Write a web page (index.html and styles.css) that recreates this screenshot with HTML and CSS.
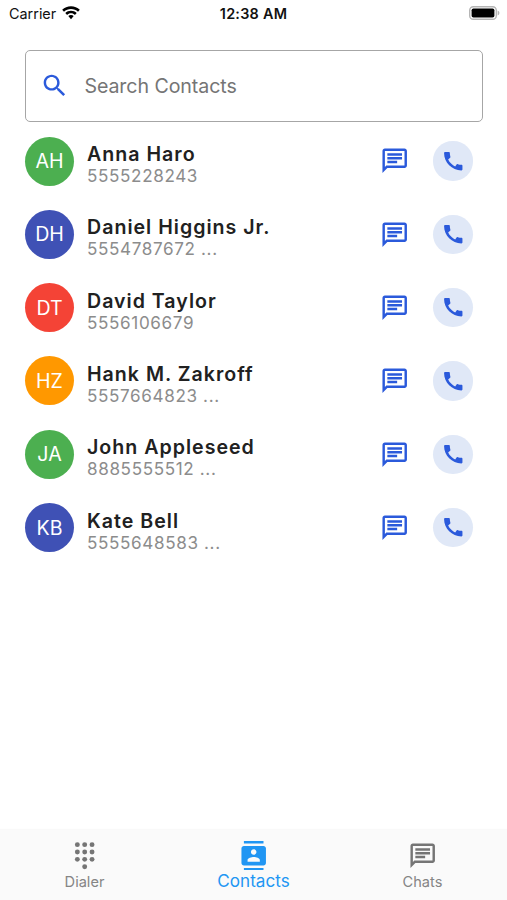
FILE: index.html
```html
<!DOCTYPE html>
<html lang="en">
<head>
<meta charset="utf-8">
<title>Contacts</title>
<link rel="stylesheet" href="styles.css">
</head>
<body>
<svg class="defs" aria-hidden="true">
  <symbol id="chat" viewBox="0 0 24 24"><path d="M4 4h16v12H5.170L4 17.170V4m0-2c-1.100 0-1.990.9-1.990 2L2 22l4-4h14c1.100 0 2-.9 2-2V4c0-1.100-.9-2-2-2H4zm2 10h8v2H6v-2zm0-3h12v2H6V9zm0-3h12v2H6V6z"/></symbol>
  <symbol id="call" viewBox="0 0 24 24"><path d="M20.010 15.380c-1.230 0-2.420-.2-3.530-.56-.35-.12-.74-.03-1.010.24l-1.570 1.970c-2.830-1.350-5.480-3.900-6.890-6.830l1.950-1.660c.27-.28.35-.67.24-1.020-.37-1.110-.56-2.300-.56-3.530 0-.54-.45-.99-.99-.99H4.190C3.650 3 3 3.240 3 3.990 3 13.280 10.730 21 20.010 21c.71 0 .99-.63.99-1.180v-3.450c0-.54-.45-.99-.99-.99z"/></symbol>
</svg>
<header class="status">
  <div class="carrier"><span>Carrier</span>
    <svg class="wifi" viewBox="0 0 18 14"><path d="M9 .3C5.600.300 2.500 1.600.200 3.800l1.800 1.900C3.800 3.900 6.300 2.900 9 2.900s5.200 1 7 2.800l1.800-1.900C15.500 1.600 12.400.3 9 .3zM9 4.700c-2.200 0-4.200.8-5.700 2.300l1.800 1.900C6.100 7.900 7.500 7.300 9 7.300s2.900.6 3.900 1.600L14.700 7C13.200 5.500 11.200 4.700 9 4.700zM9 9c-1 0-2 .4-2.700 1.100L9 13.200l2.700-3.100C11 9.400 10 9 9 9z"/></svg>
  </div>
  <div class="time">12:38 AM</div>
  <div class="power"><svg class="battery" viewBox="0 0 31 14"><rect x=".7" y=".7" width="26.600" height="12.600" rx="3.600" fill="#fff" stroke="#b5b5b5" stroke-width="1.400"/><rect x="2.600" y="2.400" width="22.800" height="9.200" rx="1.800"/><path d="M28.600 4.500c2.400 1 2.400 4 0 5z" fill="#b5b5b5"/></svg></div>
</header>
<main>
  <div class="search">
    <svg class="icon" viewBox="0 0 24 24"><path d="M15.500 14h-.79l-.28-.27C15.410 12.590 16 11.110 16 9.500 16 5.910 13.090 3 9.500 3S3 5.910 3 9.500 5.910 16 9.500 16c1.610 0 3.090-.59 4.230-1.570l.27.28v.79l5 4.990L20.490 19l-4.990-5zm-6 0C7.010 14 5 11.990 5 9.500S7.010 5 9.500 5 14 7.010 14 9.500 11.990 14 9.500 14z"/></svg>
    <span>Search Contacts</span>
  </div>
  <ul class="list">
    <li class="row"><div class="avatar green">AH</div><div class="info"><div class="name">Anna Haro</div><div class="phone">5555228243</div></div><svg class="icon"><use href="#chat"/></svg><div class="dial"><svg><use href="#call"/></svg></div></li>
    <li class="row"><div class="avatar indigo">DH</div><div class="info"><div class="name">Daniel Higgins Jr.</div><div class="phone">5554787672 ...</div></div><svg class="icon"><use href="#chat"/></svg><div class="dial"><svg><use href="#call"/></svg></div></li>
    <li class="row"><div class="avatar red">DT</div><div class="info"><div class="name">David Taylor</div><div class="phone">5556106679</div></div><svg class="icon"><use href="#chat"/></svg><div class="dial"><svg><use href="#call"/></svg></div></li>
    <li class="row"><div class="avatar orange">HZ</div><div class="info"><div class="name">Hank M. Zakroff</div><div class="phone">5557664823 ...</div></div><svg class="icon"><use href="#chat"/></svg><div class="dial"><svg><use href="#call"/></svg></div></li>
    <li class="row"><div class="avatar green">JA</div><div class="info"><div class="name">John Appleseed</div><div class="phone">8885555512 ...</div></div><svg class="icon"><use href="#chat"/></svg><div class="dial"><svg><use href="#call"/></svg></div></li>
    <li class="row"><div class="avatar indigo">KB</div><div class="info"><div class="name">Kate Bell</div><div class="phone">5555648583 ...</div></div><svg class="icon"><use href="#chat"/></svg><div class="dial"><svg><use href="#call"/></svg></div></li>
  </ul>
</main>
<nav class="tabs">
  <div class="tab"><svg class="icon" viewBox="0 0 24 24"><g><circle cx="6" cy="3" r="2"/><circle cx="12" cy="3" r="2"/><circle cx="18" cy="3" r="2"/><circle cx="6" cy="9" r="2"/><circle cx="12" cy="9" r="2"/><circle cx="18" cy="9" r="2"/><circle cx="6" cy="15" r="2"/><circle cx="12" cy="15" r="2"/><circle cx="18" cy="15" r="2"/><circle cx="12" cy="21" r="2"/></g></svg><span>Dialer</span></div>
  <div class="tab active"><svg class="icon" viewBox="0 0 24 24"><path d="M20 0H4v2h16V0zM4 24h16v-2H4v2zM20 4H4c-1.100 0-2 .9-2 2v12c0 1.100.9 2 2 2h16c1.100 0 2-.9 2-2V6c0-1.100-.9-2-2-2zm-8 2.750c1.240 0 2.250 1.010 2.250 2.250s-1.010 2.250-2.250 2.250S9.750 10.240 9.750 9 10.760 6.750 12 6.750zM17 17H7v-1.500c0-1.670 3.330-2.500 5-2.500s5 .83 5 2.500V17z"/></svg><span>Contacts</span></div>
  <div class="tab"><svg class="icon"><use href="#chat"/></svg><span>Chats</span></div>
</nav>
</body>
</html>
```
FILE: styles.css
```css
* { box-sizing: border-box; }
body {
  margin: 0;
  height: 900px;
  display: flex;
  flex-direction: column;
  background: #fff;
  font-family: Inter, "Liberation Sans", sans-serif;
  overflow: hidden;
}
svg { display: block; flex: none; }
.defs { width: 0; height: 0; position: absolute; }
.icon { width: 29.4px; height: 29.4px; fill: currentColor; }

.status {
  height: 28px;
  padding: 0 7px 1px 9px;
  display: grid;
  grid-template-columns: 1fr auto 1fr;
  align-items: center;
  font-size: 14.4px;
  color: #111;
}
.carrier { display: flex; align-items: center; gap: 6px; }
.wifi { width: 18px; height: 14px; margin-top: -2px; }
.time { font-weight: 600; letter-spacing: 0.25px; margin-left: -2px; }
.power { display: flex; justify-content: flex-end; margin-top: -1px; }
.battery { width: 31px; height: 14px; }

main { flex: 1; padding: 22px 24.5px 0 25px; }
.search {
  height: 72px;
  border: 1px solid #a6a6a6;
  border-radius: 5px;
  display: flex;
  align-items: center;
  padding-left: 14px;
  gap: 15px;
  color: #2b5adb;
}
.search span { color: #757575; font-size: 19.6px; letter-spacing: -0.07px; }

.list { list-style: none; margin: 2.4px 0 0; padding: 0; color: #2b5adb; }
.row { height: 73.3px; display: flex; align-items: center; padding-right: 10px; }
.avatar {
  width: 49px;
  height: 49px;
  border-radius: 50%;
  display: flex;
  align-items: center;
  justify-content: center;
  color: #fff;
  font-size: 19.6px;
}
.green { background: #4caf50; }
.indigo { background: #3f51b5; }
.red { background: #f44336; }
.orange { background: #ff9800; }
.info { flex: 1; margin-left: 13px; padding-top: 5px; white-space: nowrap; }
.name { font-size: 19.6px; line-height: 24px; font-weight: 600; letter-spacing: 1px; color: #212121; }
.phone { font-size: 17.1px; line-height: 19px; letter-spacing: 0.63px; color: #8c8c8c; }
.dial {
  width: 39.2px;
  height: 39.2px;
  margin-left: 24.4px;
  border-radius: 50%;
  background: #e0e8f7;
  display: flex;
  align-items: center;
  justify-content: center;
}
.dial svg { width: 24.5px; height: 24.5px; fill: currentColor; }

.tabs {
  height: 70px;
  background: #fafafa;
  box-shadow: 0 -1px 1px rgba(0, 0, 0, 0.025);
  display: grid;
  grid-template-columns: repeat(3, 1fr);
}
.tab {
  display: flex;
  flex-direction: column;
  align-items: center;
  padding-top: 10.8px;
  color: #757575;
  font-size: 14.6px;
  line-height: 20px;
}
.tab span { margin-top: 2px; color: #858585; }
.active { color: #2196f3; font-size: 17.1px; }
.active span { margin-top: 1px; color: #2196f3; }
```
